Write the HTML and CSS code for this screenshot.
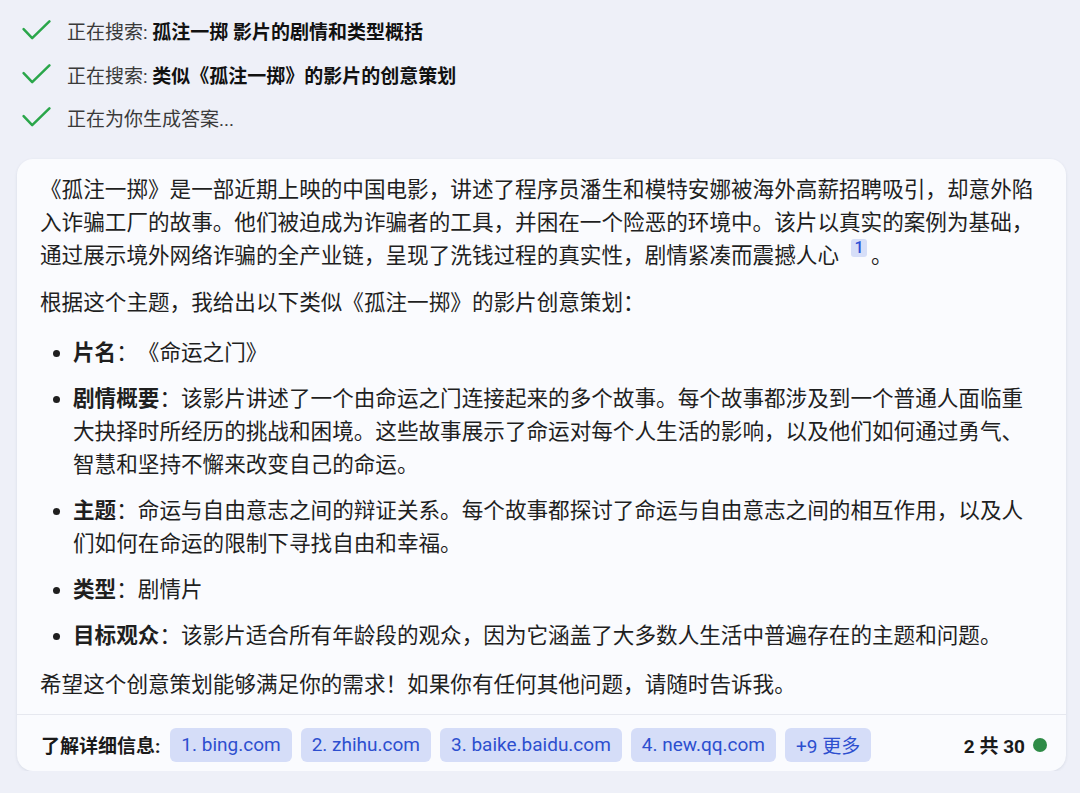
FILE: index.html
```html
<!DOCTYPE html>
<html lang="zh-CN">
<head>
    <meta charset="UTF-8">
    <title>孤注一掷</title>
    <link rel="stylesheet" href="styles.css">
</head>
<body>
    <ul class="steps">
        <li class="step">
            <svg class="check" viewBox="0 0 30 22"><path d="M1.5 9.5 L10.5 19 L28.5 1.5"/></svg>
            <span>正在搜索: <b>孤注一掷 影片的剧情和类型概括</b></span>
        </li>
        <li class="step">
            <svg class="check" viewBox="0 0 30 22"><path d="M1.5 9.5 L10.5 19 L28.5 1.5"/></svg>
            <span>正在搜索: <b>类似《孤注一掷》的影片的创意策划</b></span>
        </li>
        <li class="step">
            <svg class="check" viewBox="0 0 30 22"><path d="M1.5 9.5 L10.5 19 L28.5 1.5"/></svg>
            <span>正在为你生成答案...</span>
        </li>
    </ul>

    <div class="card">
        <div class="answer">
            <p>《孤注一掷》是一部近期上映的中国电影，讲述了程序员潘生和模特安娜被海外高薪招聘吸引，却意外陷入诈骗工厂的故事。他们被迫成为诈骗者的工具，并困在一个险恶的环境中。该片以真实的案例为基础，通过展示境外网络诈骗的全产业链，呈现了洗钱过程的真实性，剧情紧凑而震撼人心<span class="ref">1</span>。</p>
            <p>根据这个主题，我给出以下类似《孤注一掷》的影片创意策划：</p>
            <ul class="plan">
                <li><b>片名</b>：《命运之门》</li>
                <li><b>剧情概要</b>：该影片讲述了一个由命运之门连接起来的多个故事。每个故事都涉及到一个普通人面临重大抉择时所经历的挑战和困境。这些故事展示了命运对每个人生活的影响，以及他们如何通过勇气、智慧和坚持不懈来改变自己的命运。</li>
                <li><b>主题</b>：命运与自由意志之间的辩证关系。每个故事都探讨了命运与自由意志之间的相互作用，以及人们如何在命运的限制下寻找自由和幸福。</li>
                <li><b>类型</b>：剧情片</li>
                <li><b>目标观众</b>：该影片适合所有年龄段的观众，因为它涵盖了大多数人生活中普遍存在的主题和问题。</li>
            </ul>
            <p>希望这个创意策划能够满足你的需求！如果你有任何其他问题，请随时告诉我。</p>
        </div>
        <div class="sources">
            <span class="label">了解详细信息:</span>
            <a class="pill">1. bing.com</a>
            <a class="pill">2. zhihu.com</a>
            <a class="pill">3. baike.baidu.com</a>
            <a class="pill">4. new.qq.com</a>
            <a class="pill">+9 更多</a>
            <span class="count">2 共 30</span>
            <span class="dot"></span>
        </div>
    </div>
</body>
</html>
```

FILE: styles.css
```css
body {
    margin: 0;
    background-color: #eef0f8;
    font-family: Roboto, "Noto Sans CJK SC", sans-serif;
    color: #1f1f1f;
    text-spacing-trim: space-all;
}

.steps {
    list-style: none;
    margin: 0;
    padding: 9px 0 0 22px;
}

.step {
    display: flex;
    align-items: center;
    height: 43.5px;
    font-size: 19px;
    color: #3a3a3a;
}

.step b {
    color: #111;
}

.check {
    width: 29px;
    height: 21px;
    margin-right: 16px;
    fill: none;
    stroke: #2aa64a;
    stroke-width: 2.6;
    stroke-linecap: round;
    stroke-linejoin: round;
}

.card {
    margin: 19px 14px 0 17px;
    background-color: #fafbfe;
    border-radius: 16px;
    box-shadow: 0 1px 3px rgba(60, 70, 110, 0.12);
    overflow: hidden;
}

.answer {
    padding: 14px 24px 13px 23px;
    font-size: 21.6px;
    line-height: 33px;
}

.answer p {
    margin: 0 0 14px;
}

.answer p:last-child {
    margin-bottom: 0;
}

.ref {
    display: inline-block;
    vertical-align: top;
    margin: 0 4px 0 12px;
    width: 16px;
    height: 18px;
    line-height: 18px;
    font-family: Roboto, sans-serif;
    font-size: 16px;
    font-weight: 500;
    text-align: center;
    color: #2b4fd6;
    background-color: #d6def8;
    border-radius: 3px;
}

.plan {
    margin: 17px 0 16px;
    padding-left: 33px;
}

.plan li {
    margin-bottom: 13px;
}

.plan li:last-child {
    margin-bottom: 0;
}

.sources {
    display: flex;
    align-items: center;
    gap: 9px;
    padding: 13px 19px 9px 24px;
    border-top: 1px solid #e6e8ef;
    font-size: 19px;
}

.label {
    font-weight: bold;
    color: #1a1a1a;
    margin-right: 1px;
}

.pill {
    display: inline-flex;
    align-items: center;
    height: 34px;
    padding: 0 11px;
    background-color: #d5ddf8;
    color: #2d4fcf;
    border-radius: 6px;
}

.count {
    margin-left: auto;
    font-weight: bold;
    color: #1a1a1a;
}

.dot {
    width: 14px;
    height: 14px;
    margin-left: -1px;
    border-radius: 50%;
    background-color: #2e8b47;
}
```
